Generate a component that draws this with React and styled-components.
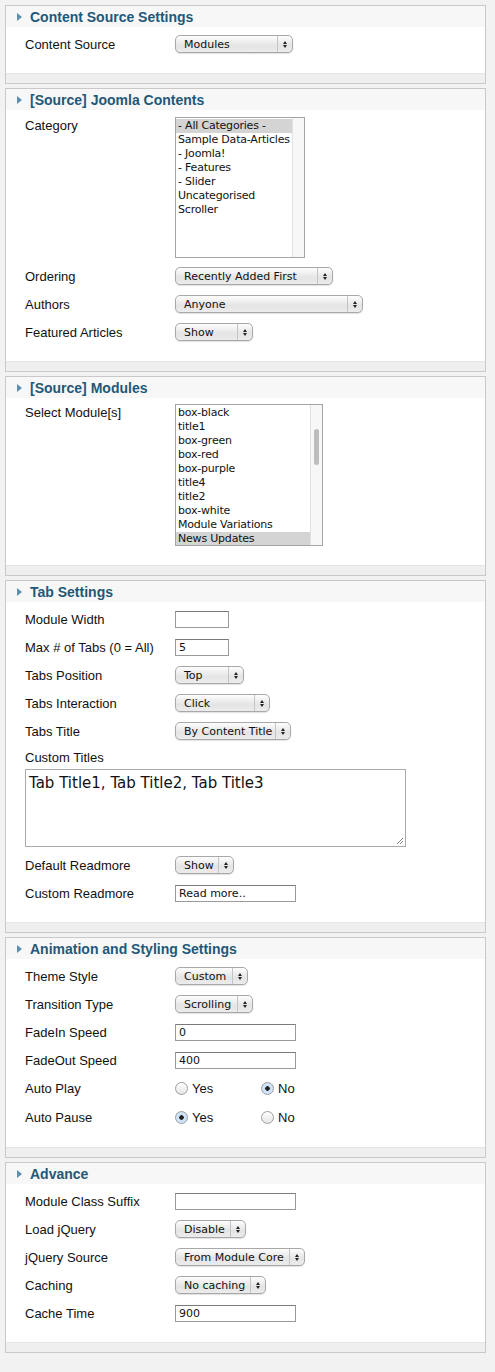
import React from "react";
import styled, { createGlobalStyle } from "styled-components";

const Global = createGlobalStyle`
  body { margin: 0; background: #f2f2f2; font-family: "Liberation Sans", Arial, sans-serif; }
`;
const Page = styled.div`
  display: flex; flex-direction: column; gap: 4px; padding: 5px 0 0 5px; width: 481px;
`;
const Panel = styled.div`
  border: 1px solid #c9c9c9; background: #fff; display: flex; flex-direction: column;
`;
const Header = styled.div`
  height: 21px; background: #f7f7f7; display: flex; align-items: center; padding-left: 11px; gap: 8px;
  color: #1f5878; font-weight: bold; font-size: 14px;
`;
const Tri = styled.span`
  width: 0; height: 0; border-left: 5px solid #5d8fb0; border-top: 4px solid transparent; border-bottom: 4px solid transparent;
`;
const Body = styled.div`
  padding: ${p => p.$top}px 0 15px 19px; display: flex; flex-direction: column;
`;
const Strip = styled.div` height: 9px; background: #efefef; border-top: 1px solid #e6e6e6; `;
const Row = styled.div`
  display: flex; align-items: ${p => (p.$top ? "flex-start" : "center")};
  min-height: ${p => p.$h || 28}px; margin-bottom: ${p => p.$mb || 0}px;
`;
const Label = styled.div`
  width: 150px; font-size: 13px; color: #111; padding-top: ${p => (p.$top ? 1 : 0)}px;
`;
const Sel = styled.div`
  width: ${p => p.$w}px; height: 18px; box-sizing: border-box; border: 1px solid #a8a8a8; border-radius: 5px;
  background: linear-gradient(#fdfdfd, #e4e4e4 60%, #ececec); display: flex; align-items: center;
  font-family: "DejaVu Sans", sans-serif; font-size: 11px; color: #111; box-shadow: 0 1px 1px rgba(0,0,0,.12);
`;
const SelText = styled.span` flex: 1; padding-left: 8px; white-space: nowrap; overflow: hidden; `;
const Arrows = styled.span`
  width: 14px; height: 100%; border-left: 1px solid #c4c4c4; display: flex; flex-direction: column;
  align-items: center; justify-content: center; gap: 1px;
  &::before { content: ""; border-bottom: 3px solid #222; border-left: 2.5px solid transparent; border-right: 2.5px solid transparent; }
  &::after { content: ""; border-top: 3px solid #222; border-left: 2.5px solid transparent; border-right: 2.5px solid transparent; }
`;
const Select = ({ w, children }) => (<Sel $w={w}><SelText>{children}</SelText><Arrows /></Sel>);
const Input = styled.div`
  width: ${p => p.$w}px; height: 17px; box-sizing: border-box; border: 1px solid #9a9a9a; border-top-color: #7a7a7a;
  font-family: "DejaVu Sans", sans-serif; font-size: 11px; padding: 1px 3px; color: #111; background: #fff;
`;
const List = styled.div`
  width: ${p => p.$w}px; height: ${p => p.$h}px; box-sizing: border-box; border: 1px solid #a4a4a4;
  display: flex; font-family: "DejaVu Sans", sans-serif; font-size: 11px; color: #111; overflow: hidden;
`;
const Opts = styled.div` flex: 1; padding-top: 1px; min-width: 0; `;
const Opt = styled.div`
  height: 14px; line-height: 14px; padding-left: 2px; white-space: nowrap; letter-spacing: -0.2px;
  background: ${p => (p.$sel ? "#d4d4d4" : "transparent")};
`;
const Track = styled.div`
  width: 11px; flex: none; border-left: 1px solid #e2e2e2; background: #f7f7f7; position: relative;
`;
const Thumb = styled.div`
  position: absolute; left: 3px; width: 5px; top: ${p => p.$t}px; height: ${p => p.$h}px; border-radius: 3px; background: #bdbdbd;
`;
const TextArea = styled.div`
  width: 381px; height: 78px; box-sizing: border-box; border: 1px solid #aaa; padding: 4px 3px; margin-bottom: 4px;
  font-family: "DejaVu Sans", sans-serif; font-size: 15px; color: #111; position: relative;
`;
const Grip = styled.svg` position: absolute; right: 1px; bottom: 1px; `;
const RadioGroup = styled.div` display: flex; font-size: 13px; color: #111; `;
const RadioItem = styled.label` width: 86px; display: flex; align-items: center; gap: 2px; `;
const Circle = styled.span`
  width: 13px; height: 13px; box-sizing: border-box; border-radius: 50%; border: 1px solid #9d9d9d;
  background: ${p => (p.$on ? "radial-gradient(#222 0 2px, #cfe3f8 2.5px)" : "linear-gradient(#fff, #e5e5e5)")};
  margin-right: 2px;
`;
const Radios = ({ yes }) => (
  <RadioGroup>
    <RadioItem><Circle $on={yes} /> Yes</RadioItem>
    <RadioItem><Circle $on={!yes} /> No</RadioItem>
  </RadioGroup>
);

const Section = ({ title, top = 3, children }) => (
  <Panel>
    <Header><Tri />{title}</Header>
    <Body $top={top}>{children}</Body>
    <Strip />
  </Panel>
);
const F = ({ label, children, h }) => (<Row $h={h}><Label>{label}</Label>{children}</Row>);

export default function App() {
  return (
    <Page>
      <Global />
      <Section title="Content Source Settings">
        <F label="Content Source"><Select w={118}>Modules</Select></F>
      </Section>
      <Section title="[Source] Joomla Contents" top={7}>
        <Row $top $mb={4}><Label $top>Category</Label>
          <List $w={130} $h={141}>
            <Opts>
              <Opt $sel>- All Categories -</Opt><Opt>Sample Data-Articles</Opt><Opt>- Joomla!</Opt>
              <Opt>- Features</Opt><Opt>- Slider</Opt><Opt>Uncategorised</Opt><Opt>Scroller</Opt>
            </Opts>
            <Track />
          </List>
        </Row>
        <F label="Ordering"><Select w={158}>Recently Added First</Select></F>
        <F label="Authors"><Select w={188}>Anyone</Select></F>
        <F label="Featured Articles"><Select w={78}>Show</Select></F>
      </Section>
      <Section title="[Source] Modules" top={6}>
        <Row $top $mb={4}><Label $top>Select Module[s]</Label>
          <List $w={148} $h={142}>
            <Opts>
              {["box-black","title1","box-green","box-red","box-purple","title4","title2","box-white","Module Variations"].map(o => <Opt key={o}>{o}</Opt>)}
              <Opt $sel>News Updates</Opt>
            </Opts>
            <Track><Thumb $t={24} $h={36} /></Track>
          </List>
        </Row>
      </Section>
      <Section title="Tab Settings">
        <F label="Module Width"><Input $w={54} /></F>
        <F label="Max # of Tabs (0 = All)"><Input $w={54}>5</Input></F>
        <F label="Tabs Position"><Select w={69}>Top</Select></F>
        <F label="Tabs Interaction"><Select w={95}>Click</Select></F>
        <F label="Tabs Title"><Select w={116}>By Content Title</Select></F>
        <F label="Custom Titles" h={24} />
        <TextArea>Tab Title1, Tab Title2, Tab Title3
          <Grip width="9" height="9" viewBox="0 0 9 9"><path d="M8 2 L2 8 M8 5 L5 8" stroke="#888" strokeWidth="1" /></Grip>
        </TextArea>
        <F label="Default Readmore"><Select w={59}>Show</Select></F>
        <F label="Custom Readmore"><Input $w={121}>Read more..</Input></F>
      </Section>
      <Section title="Animation and Styling Settings">
        <F label="Theme Style"><Select w={73}>Custom</Select></F>
        <F label="Transition Type"><Select w={78}>Scrolling</Select></F>
        <F label="FadeIn Speed"><Input $w={121}>0</Input></F>
        <F label="FadeOut Speed"><Input $w={121}>400</Input></F>
        <F label="Auto Play"><Radios yes={false} /></F>
        <F label="Auto Pause" h={30}><Radios yes /></F>
      </Section>
      <Section title="Advance">
        <F label="Module Class Suffix"><Input $w={121} /></F>
        <F label="Load jQuery"><Select w={71}>Disable</Select></F>
        <F label="jQuery Source"><Select w={130}>From Module Core</Select></F>
        <F label="Caching"><Select w={91}>No caching</Select></F>
        <F label="Cache Time"><Input $w={121}>900</Input></F>
      </Section>
    </Page>
  );
}
